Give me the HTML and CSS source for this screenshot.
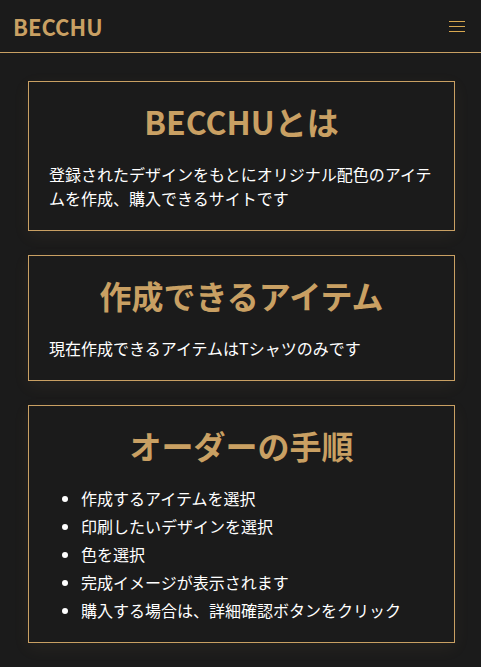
FILE: index.html
```html
<!doctype html>
<html lang="ja">
<head>
<meta charset="utf-8">
<meta name="viewport" content="width=device-width, initial-scale=1">
<title>BECCHU</title>
<link rel="stylesheet" href="styles.css">
</head>
<body>
<header class="site-header">
  <a class="logo" href="#">BECCHU</a>
  <button class="menu-btn" aria-label="メニュー">
    <span></span><span></span><span></span>
  </button>
</header>

<main class="content">
  <section class="card">
    <h2 class="card-title">BECCHUとは</h2>
    <p class="card-text">登録されたデザインをもとにオリジナル配色のアイテムを作成、購入できるサイトです</p>
  </section>

  <section class="card">
    <h2 class="card-title">作成できるアイテム</h2>
    <p class="card-text">現在作成できるアイテムはTシャツのみです</p>
  </section>

  <section class="card">
    <h2 class="card-title">オーダーの手順</h2>
    <ul class="steps">
      <li>作成するアイテムを選択</li>
      <li>印刷したいデザインを選択</li>
      <li>色を選択</li>
      <li>完成イメージが表示されます</li>
      <li>購入する場合は、詳細確認ボタンをクリック</li>
    </ul>
  </section>
</main>
</body>
</html>
```

FILE: styles.css
```css
body { margin:0; background-color:#1b1b1b; color:#fff; font-family:"Noto Sans CJK JP", "Noto Sans", sans-serif; font-size:16px }
a { text-decoration:none }

.site-header { display:flex; align-items:center; justify-content:space-between; height:52px; padding:0 16px 0 13px; border-bottom:1px solid #c9a063 }
.logo { color:#c9a063; font-size:22px; font-weight:bold; line-height:1 }
.menu-btn { display:flex; flex-direction:column; gap:4px; width:16px; padding:0; border:0; background:none; cursor:pointer }
.menu-btn span { display:block; height:1px; background-color:#d8a850 }

.content { padding:28px 26px 28px 28px }
.card { margin-bottom:24px; padding:20px; border:1px solid #c9a063; box-shadow:0 5px 16px rgba(201,160,99,.07) }
.card-title { margin:0 0 22px; color:#c9a063; font-size:32px; font-weight:bold; line-height:38px; text-align:center }
.card-text { margin:0; line-height:24px }
.steps { margin:0; padding-left:32px; line-height:24px }
.steps li + li { margin-top:4px }
```
